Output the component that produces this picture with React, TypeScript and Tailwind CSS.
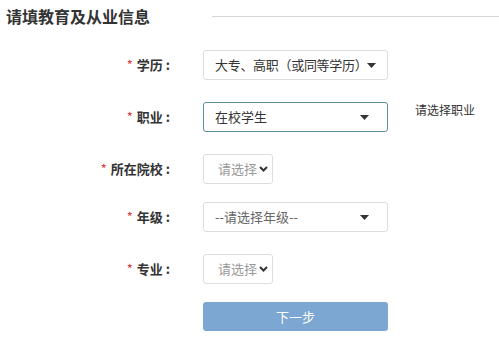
const font = { fontFamily: '"Noto Sans CJK SC", "Microsoft YaHei", sans-serif' };

function Caret() {
  return (
    <svg width="9" height="5" viewBox="0 0 9 5" className="shrink-0">
      <path d="M0 0h9L4.5 5z" fill="#333" />
    </svg>
  );
}

function Chevron() {
  return (
    <svg width="9" height="6" viewBox="0 0 9 6" className="shrink-0">
      <path d="M1 1l3.5 3.5L8 1" stroke="#333" strokeWidth="2" fill="none" />
    </svg>
  );
}

function Label({ text }: { text: string }) {
  return (
    <div className="w-[172px] shrink-0 pr-[2px] text-right text-[13px] font-bold text-[#333]">
      <span className="mr-[4px] font-normal text-[#e03b3b]">*</span>
      {text}
      <span className="ml-[3px]">:</span>
    </div>
  );
}

export default function App() {
  return (
    <div className="h-[343px] w-[499px] overflow-hidden bg-white" style={font}>
      <div className="flex items-center pt-[4px]">
        <h2 className="ml-[6px] text-[16px] font-bold leading-[24px] text-[#333]">请填教育及从业信息</h2>
        <div className="ml-[62px] h-px flex-1 bg-[#d6d6d6]" />
      </div>

      <div className="mt-[22px] flex flex-col">
        <div className="flex items-center">
          <Label text="学历" />
          <div className="ml-[31px] flex h-[30px] w-[185px] items-center justify-between rounded-[3px] border border-[#ddd] pl-[11px] pr-[11px] text-[13px] text-[#333]">
            <span className="tracking-[-0.3px]">大专、高职（或同等学历）</span>
            <Caret />
          </div>
        </div>

        <div className="mt-[22px] flex items-center">
          <Label text="职业" />
          <div className="ml-[31px] flex h-[30px] w-[185px] items-center justify-between rounded-[3px] border border-[#5f8f9c] pl-[11px] pr-[18px] text-[13px] text-[#333]">
            <span>在校学生</span>
            <Caret />
          </div>
          <span className="ml-[27px] -mt-[14px] text-[12px] text-[#333]">请选择职业</span>
        </div>

        <div className="mt-[22px] flex items-center">
          <Label text="所在院校" />
          <div className="ml-[31px] flex h-[30px] w-[70px] items-center justify-between rounded-[3px] border border-[#ddd] pl-[14px] pr-[4px] text-[13px] text-[#999]">
            <span>请选择</span>
            <Chevron />
          </div>
        </div>

        <div className="mt-[18px] flex items-center">
          <Label text="年级" />
          <div className="ml-[31px] flex h-[30px] w-[185px] items-center justify-between rounded-[3px] border border-[#ddd] pl-[11px] pr-[18px] text-[13px] text-[#666]">
            <span>--请选择年级--</span>
            <Caret />
          </div>
        </div>

        <div className="mt-[22px] flex items-center">
          <Label text="专业" />
          <div className="ml-[31px] flex h-[30px] w-[70px] items-center justify-between rounded-[3px] border border-[#ddd] pl-[14px] pr-[4px] text-[13px] text-[#999]">
            <span>请选择</span>
            <Chevron />
          </div>
        </div>

        <div className="mt-[18px] flex">
          <div className="ml-[203px] flex h-[29px] w-[185px] items-center justify-center rounded-[3px] bg-[#7ba7d2] text-[13px] text-white">
            下一步
          </div>
        </div>
      </div>
    </div>
  );
}
